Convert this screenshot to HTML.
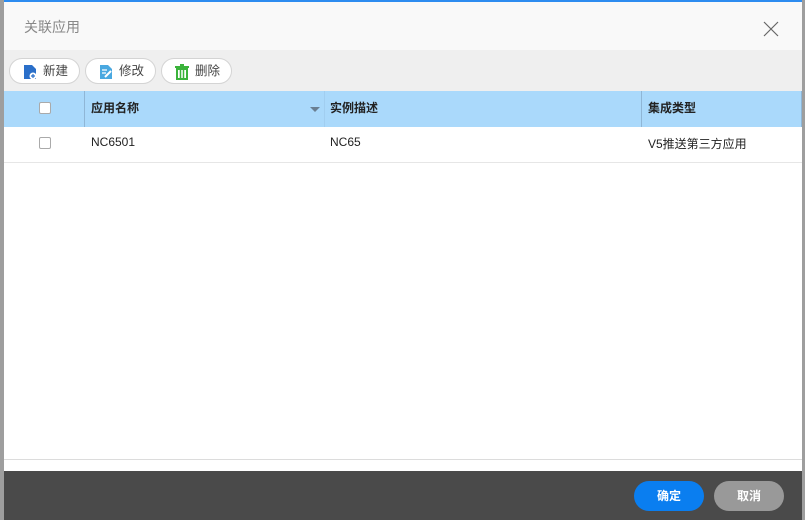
<!DOCTYPE html>
<html><head><meta charset="utf-8"><style>
*{margin:0;padding:0;box-sizing:border-box}
body{width:805px;height:520px;background:#9e9e9e;position:relative;overflow:hidden;font-family:"Liberation Sans","Noto Sans CJK SC",sans-serif;font-size:12px;color:#222}
.dlg{position:absolute;left:4px;top:0;width:798px;height:520px;background:#fff}
.top{position:absolute;left:0;top:0;width:100%;height:2px;background:#2d8cf0;z-index:2}
.hd{position:absolute;left:0;top:0;width:100%;height:50px;background:#f9f9f9}
.hd .t{position:absolute;left:20px;top:17px;font-size:14px;color:#888}
.tb{position:absolute;left:0;top:50px;width:100%;height:41px;background:#efefef}
.btn{position:absolute;top:8px;height:26px;border:1px solid #d4d4d4;border-radius:13px;background:#fff;font-size:12.5px;color:#444;line-height:24px;padding-left:33px}
.btn svg{position:absolute;left:13px;top:5px}
.th{position:absolute;left:0;top:91px;width:798px;height:36px;background:#aad9fb}
.row{position:absolute;left:0;top:127px;width:798px;height:36px;border-bottom:1px solid #e6e6e6}
.cell{position:absolute;top:0;height:36px;line-height:34px}
.sep{position:absolute;top:0;width:1px;height:36px;background:#8fb6d6}
.cb{position:absolute;left:35px;top:11px;width:12px;height:12px;border:1px solid #aaa;border-radius:2px;background:#fff}
.b{font-weight:bold}
.ft{position:absolute;left:0;top:471px;width:100%;height:49px;background:#4a4a4a}
.line{position:absolute;left:0;top:459px;width:100%;height:1px;background:#dcdcdc}
.fb{position:absolute;top:10px;width:70px;height:30px;border-radius:15px;color:#fff;font-weight:bold;text-align:center;line-height:30px;font-size:12px}
</style></head><body>
<div class="dlg">
<div class="top"></div>
<div class="hd"><div class="t">关联应用</div>
<svg style="position:absolute;left:759px;top:21px" width="16" height="16"><path d="M1 1L15 15M15 1L1 15" stroke="#666" stroke-width="1.2"/></svg></div>
<div class="tb">
<div class="btn" style="left:5px;width:71px"><svg width="14" height="16"><path d="M1 1h8l4 4v10H1z" fill="#2a6fc9"/><circle cx="10" cy="12" r="3.5" fill="#fff"/><path d="M10 10v4M8 12h4" stroke="#2a6fc9" stroke-width="1.2"/></svg>新建</div>
<div class="btn" style="left:81px;width:71px"><svg width="14" height="16"><path d="M1 1h8l4 4v10H1z" fill="#4aa8e0"/><path d="M3 6h5M3 9h4" stroke="#fff" stroke-width="1.2"/><path d="M12 7l-6 6" stroke="#fff" stroke-width="2"/></svg>修改</div>
<div class="btn" style="left:157px;width:71px"><svg width="14" height="16"><path d="M0 3h14M5 1h4" stroke="#3bb33b" stroke-width="2"/><path d="M2 5h10v10H2z" fill="none" stroke="#3bb33b" stroke-width="2"/><path d="M5.5 6v8M8.5 6v8" stroke="#3bb33b" stroke-width="1.5"/></svg>删除</div>
</div>
<div class="th">
<div class="cb"></div>
<div class="sep" style="left:80px"></div>
<div class="cell b" style="left:87px">应用名称</div>
<svg style="position:absolute;left:306px;top:16px" width="10" height="6"><path d="M0 0h10L5 5z" fill="#6a7f92"/></svg>
<div class="sep" style="left:320px;opacity:.3"></div>
<div class="cell b" style="left:326px">实例描述</div>
<div class="sep" style="left:637px"></div>
<div class="cell b" style="left:644px">集成类型</div>
<div class="sep" style="left:797px"></div>
</div>
<div class="row">
<div class="cb" style="top:10px"></div>
<div class="cell" style="left:87px;line-height:30px">NC6501</div>
<div class="cell" style="left:326px;line-height:30px">NC65</div>
<div class="cell" style="left:644px;line-height:34px">V5推送第三方应用</div>
</div>
<div class="line"></div>
<div class="ft">
<div class="fb" style="left:630px;background:#0a7ef0">确定</div>
<div class="fb" style="left:710px;background:#999">取消</div>
</div>
</div>
</body></html>
